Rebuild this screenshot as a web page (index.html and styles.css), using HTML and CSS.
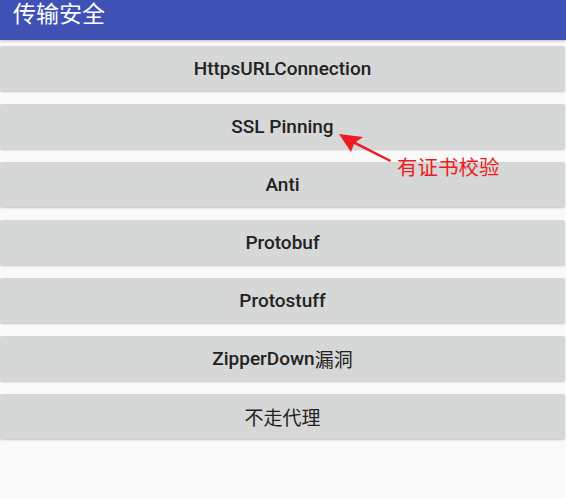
FILE: index.html
```html
<!DOCTYPE html>
<html>
<head>
<meta charset="utf-8">
<link rel="stylesheet" href="styles.css">
</head>
<body>
<header class="appbar"><span class="title">传输安全</span></header>
<main class="list">
  <div class="btn">HttpsURLConnection</div>
  <div class="btn">SSL Pinning</div>
  <div class="btn">Anti</div>
  <div class="btn">Protobuf</div>
  <div class="btn">Protostuff</div>
  <div class="btn">ZipperDown<span class="cjk">漏洞</span></div>
  <div class="btn"><span class="cjk">不走代理</span></div>
</main>
<svg class="arrow" width="60" height="34" viewBox="0 0 60 34">
  <polygon points="0,0 24,3 17,8 52,26 51,28 15,10 12,18" fill="#EC1C24"/>
</svg>
<div class="note">有证书校验</div>
</body>
</html>
```
FILE: styles.css
```css
html, body {
  margin: 0;
  padding: 0;
}
body {
  width: 566px;
  height: 498px;
  background: #FAFAFA;
  position: relative;
  overflow: hidden;
  font-family: Roboto, "Noto Sans CJK SC", sans-serif;
}
.appbar {
  height: 40px;
  background: #3F51B5;
  box-shadow: 0 1px 3px rgba(0,0,0,0.25);
  position: relative;
  z-index: 1;
}
.title {
  display: block;
  padding-left: 13px;
  color: #FFFFFF;
  font-family: "Noto Sans CJK SC", sans-serif;
  font-size: 23px;
  line-height: 26px;
  position: relative;
  top: -1px;
}
.list {
  display: flex;
  flex-direction: column;
  gap: 13px;
  padding-top: 6px;
}
.btn {
  height: 45px;
  margin-right: 1px;
  background: #D6D7D7;
  border-radius: 2px;
  box-shadow: 0 1px 2px rgba(0,0,0,0.22);
  display: flex;
  align-items: center;
  justify-content: center;
  color: #222222;
  font-size: 19px;
  font-weight: 500;
}
.cjk {
  font-family: "Noto Sans CJK SC", sans-serif;
  font-weight: 400;
  font-size: 19px;
}
.arrow {
  position: absolute;
  left: 339px;
  top: 134px;
}
.note {
  position: absolute;
  left: 397px;
  top: 153px;
  color: #EC1C24;
  font-family: "Noto Sans CJK SC", sans-serif;
  font-size: 20.5px;
  line-height: 26px;
}
```
